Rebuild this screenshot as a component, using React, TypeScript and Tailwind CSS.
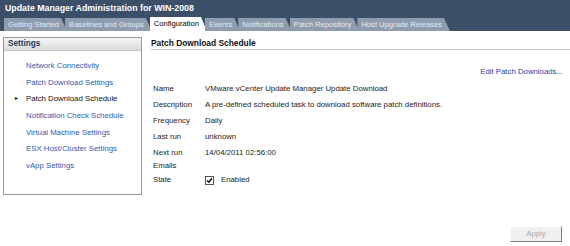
import React from "react"

const tabs = [
  "Getting Started",
  "Baselines and Groups",
  "Configuration",
  "Events",
  "Notifications",
  "Patch Repository",
  "Host Upgrade Releases",
]

const menu = [
  "Network Connectivity",
  "Patch Download Settings",
  "Patch Download Schedule",
  "Notification Check Schedule",
  "Virtual Machine Settings",
  "ESX Host/Cluster Settings",
  "vApp Settings",
]

const rows: [string, string, string][] = [
  ["Name", "VMware vCenter Update Manager Update Download", "h-[16px]"],
  ["Description", "A pre-defined scheduled task to download software patch definitions.", "h-[16px]"],
  ["Frequency", "Daily", "h-[16px]"],
  ["Last run", "unknown", "h-[16px]"],
  ["Next run", "14/04/2011 02:56:00", "h-[13px]"],
  ["Emails", "", "h-[13px]"],
]

export default function App() {
  return (
    <div
      className="w-[570px] h-[246px] bg-white overflow-hidden text-[7.8px] text-[#222]"
      style={{ fontFamily: '"Liberation Sans", Arial, sans-serif' }}
    >
      {/* header */}
      <div className="h-[31px] bg-[#3b5068] flex flex-col">
        <div className="h-[17px] pl-[5px] pt-[3px] text-white font-bold text-[8.8px] leading-[11px]">
          Update Manager Administration for WIN-2008
        </div>
        <div className="flex pl-[4px] h-[14px] items-end text-[7.6px]">
          {tabs.map((t) => {
            const active = t === "Configuration"
            return (
              <div
                key={t}
                className={`-mr-[2px] pl-[4px] pr-[8px] whitespace-nowrap [clip-path:polygon(0_0,calc(100%-6px)_0,100%_100%,0_100%)] ${
                  active ? "bg-white text-black h-[14px] leading-[14px]" : "bg-[#8e9cae] text-[#e6ebf1] h-[13px] leading-[13px]"
                }`}
              >
                {t}
              </div>
            )
          })}
        </div>
      </div>

      <div className="flex pt-[6px]">
        {/* left settings panel */}
        <div className="ml-[3px] w-[139px] h-[158px] border border-[#9a9a9a] flex flex-col">
          <div className="h-[13px] bg-gradient-to-b from-[#f4f4f4] to-[#dcdcdc] border-b border-[#c8c8c8] pl-[4px] leading-[12px] font-bold text-[8.2px] text-[#1d3a5c]">
            Settings
          </div>
          <div className="flex flex-col pt-[9px] gap-[5.7px]">
            {menu.map((m) => {
              const sel = m === "Patch Download Schedule"
              return (
                <div key={m} className="flex items-center h-[11px] leading-[11px]">
                  <div className="w-[22px] flex justify-center pl-[2px]">
                    {sel && <span className="text-[6px] text-black">▸</span>}
                  </div>
                  <span className={sel ? "text-[#111]" : "text-[#2a5db0]"}>{m}</span>
                </div>
              )
            })}
          </div>
        </div>

        {/* right content */}
        <div className="flex-1 pl-[9px] flex flex-col">
          <div className="font-bold text-[8.4px] text-[#111] h-[14px] leading-[14px] border-b border-[#c8c8c8] -mt-[1px]">
            Patch Download Schedule
          </div>
          <div className="flex justify-end pr-[7px] pt-[16px] text-[#2a3fa8] h-[37px]">
            Edit Patch Downloads...
          </div>
          <div className="flex flex-col pl-[2px] -mt-[4px]">
            {rows.map(([k, v, h]) => (
              <div key={k} className={`flex leading-[11px] ${h}`}>
                <div className="w-[52px]">{k}</div>
                <div>{v}</div>
              </div>
            ))}
            <div className="flex items-center h-[14px]">
              <div className="w-[52px]">State</div>
              <div className="w-[9px] h-[9px] border border-[#555] bg-white flex items-center justify-center">
                <svg width="7" height="7" viewBox="0 0 7 7">
                  <path d="M1 3.5 L2.8 5.3 L6 1.2" stroke="#111" strokeWidth="1.4" fill="none" />
                </svg>
              </div>
              <span className="ml-[7px]">Enabled</span>
            </div>
          </div>
        </div>
      </div>

      <div className="flex justify-end pr-[8px] mt-[31px]">
        <div className="w-[52px] h-[16px] bg-[#f0f0f0] border-r border-b border-[#808080] border-t border-l border-t-white border-l-white text-[#a8a8a8] flex items-center justify-center">
          Apply
        </div>
      </div>
    </div>
  )
}
